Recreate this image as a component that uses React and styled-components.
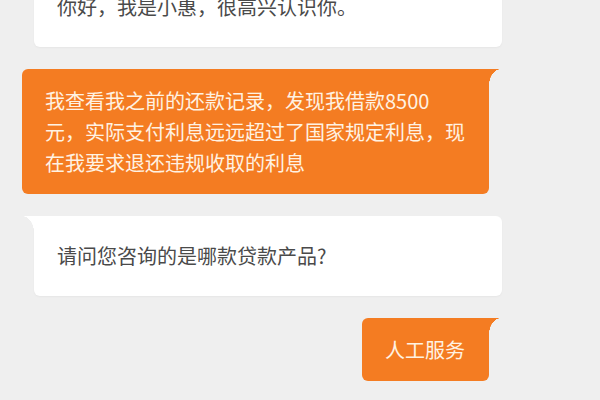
import styled, { createGlobalStyle, css } from "styled-components";

const GlobalStyle = createGlobalStyle`
  html, body {
    margin: 0;
    padding: 0;
    background: #efefef;
    overflow: hidden;
  }
  body {
    font-family: "Noto Sans CJK SC", "Noto Sans", sans-serif;
  }
`;

const BG = "#efefef";
const ORANGE = "#f47c22";

const Page = styled.div`
  width: 600px;
  height: 400px;
  background: ${BG};
  overflow: hidden;
`;

const Chat = styled.div`
  display: flex;
  flex-direction: column;
  gap: 22px;
  margin-top: -33px;
  padding: 0 98px 0 22px;
`;

const Row = styled.div`
  display: flex;
  justify-content: ${(p) => (p.mine ? "flex-end" : "flex-start")};
`;

const Bubble = styled.div`
  position: relative;
  font-size: 20px;
  line-height: 31px;
  border-radius: 6px;
  ${(p) =>
    p.mine
      ? css`
          background: ${ORANGE};
          color: #fff2e2;
          margin-right: 13px;
          padding: 16px 24px 16px 23px;
          border-top-right-radius: 0;
        `
      : css`
          background: #ffffff;
          color: #4a4a4a;
          margin-left: 12px;
          padding: 24px 23px 25px 23px;
          flex: 1;
          box-shadow: 0 1px 2px rgba(0, 0, 0, 0.04);
          border-top-left-radius: ${p.tail ? "0" : "6px"};
        `}

  ${(p) =>
    p.tail &&
    css`
      &::before {
        content: "";
        position: absolute;
        top: 0;
        width: 12px;
        height: 16px;
        ${p.mine
          ? css`
              left: 100%;
              background: radial-gradient(
                ellipse 12px 16px at 100% 100%,
                transparent 98%,
                ${ORANGE} 100%
              );
            `
          : css`
              right: 100%;
              background: radial-gradient(
                ellipse 12px 16px at 0% 100%,
                transparent 98%,
                #ffffff 100%
              );
            `}
      }
    `}
`;

const Wide = styled(Bubble)`
  width: 422px;
`;

export default function App() {
  return (
    <Page>
      <GlobalStyle />
      <Chat>
        <Row>
          <Bubble>你好，我是小惠，很高兴认识你。</Bubble>
        </Row>
        <Row mine>
          <Wide mine tail>
            我查看我之前的还款记录，发现我借款8500元，实际支付利息远远超过了国家规定利息，现在我要求退还违规收取的利息
          </Wide>
        </Row>
        <Row>
          <Bubble tail>请问您咨询的是哪款贷款产品?</Bubble>
        </Row>
        <Row mine>
          <Bubble mine tail>人工服务</Bubble>
        </Row>
      </Chat>
    </Page>
  );
}
